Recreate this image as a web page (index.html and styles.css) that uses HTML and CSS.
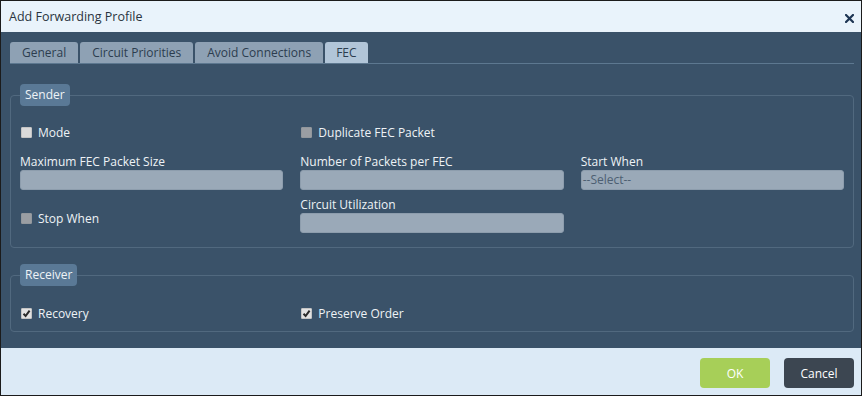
FILE: index.html
```html
<!DOCTYPE html>
<html lang="en">
<head>
  <meta charset="UTF-8">
  <meta name="viewport" content="width=device-width, initial-scale=1.0">
  <title>Add Forwarding Profile</title>
  <link rel="stylesheet" href="styles.css">
</head>
<body>
  <div class="dialog">
    <div class="dialog-head">
      <span class="dialog-title">Add Forwarding Profile</span>
      <button class="close" title="Close">
        <svg width="9" height="9" viewBox="0 0 9 9"><path d="M1 1L8 8M8 1L1 8" stroke="#1d3553" stroke-width="2.2" stroke-linecap="square"/></svg>
      </button>
    </div>

    <div class="dialog-body">
      <ul class="tabs">
        <li>General</li>
        <li>Circuit Priorities</li>
        <li>Avoid Connections</li>
        <li class="active">FEC</li>
      </ul>

      <fieldset class="group sender">
        <legend>Sender</legend>
        <div class="row">
          <label class="check"><span class="box"></span>Mode</label>
          <label class="check"><span class="box off"></span>Duplicate FEC Packet</label>
          <div></div>
        </div>
        <div class="row row-fields">
          <div class="field">
            <div class="field-label">Maximum FEC Packet Size</div>
            <div class="input"></div>
          </div>
          <div class="field">
            <div class="field-label">Number of Packets per FEC</div>
            <div class="input"></div>
          </div>
          <div class="field">
            <div class="field-label">Start When</div>
            <div class="input select">--Select--</div>
          </div>
        </div>
        <div class="row row-tight">
          <label class="check stop"><span class="box off"></span>Stop When</label>
          <div class="field">
            <div class="field-label">Circuit Utilization</div>
            <div class="input"></div>
          </div>
          <div></div>
        </div>
      </fieldset>

      <fieldset class="group receiver">
        <legend>Receiver</legend>
        <div class="row">
          <label class="check"><span class="box on"><svg width="9" height="9" viewBox="0 0 9 9"><path d="M1.5 4.8L3.6 7L7.6 1.6" fill="none" stroke="#2a2a2a" stroke-width="2"/></svg></span>Recovery</label>
          <label class="check"><span class="box on"><svg width="9" height="9" viewBox="0 0 9 9"><path d="M1.5 4.8L3.6 7L7.6 1.6" fill="none" stroke="#2a2a2a" stroke-width="2"/></svg></span>Preserve Order</label>
          <div></div>
        </div>
      </fieldset>
    </div>

    <div class="dialog-foot">
      <button class="btn btn-ok">OK</button>
      <button class="btn btn-cancel">Cancel</button>
    </div>
  </div>
</body>
</html>
```

FILE: styles.css
```css
html, body {
  margin: 0;
  padding: 0;
}
body {
  font-family: "Open Sans", "Liberation Sans", sans-serif;
  font-size: 12px;
  background: #fff;
}
.dialog {
  width: 862px;
  height: 396px;
  box-sizing: border-box;
  border: 1px solid #1b1b1b;
  display: flex;
  flex-direction: column;
}
.dialog-head {
  height: 31px;
  background: #e9f3fb;
  display: flex;
  align-items: center;
  justify-content: space-between;
  padding: 0 7px 0 8px;
}
.dialog-title {
  font-size: 12.5px;
  color: #2a3440;
  margin-top: -1px;
}
.close {
  border: none;
  background: none;
  padding: 0;
  width: 10px;
  height: 10px;
  display: flex;
  align-items: center;
  justify-content: center;
  margin-top: 3px;
  cursor: pointer;
}
.dialog-body {
  flex: 1;
  background: #3a5269;
  padding: 10px 7px 0 9px;
}
.tabs {
  list-style: none;
  margin: 0;
  padding: 0;
  display: flex;
  gap: 2px;
  border-bottom: 1px solid #5d7890;
}
.tabs li {
  height: 21px;
  line-height: 22px;
  padding: 0 12px;
  background: #8ea1b4;
  color: #2c3d4f;
  border-radius: 3px 3px 0 0;
}
.tabs li.active {
  background: #b1c5d8;
  padding: 0 11px;
}
.group {
  margin: 20px 0 0;
  border: 1px solid #51697f;
  border-radius: 4px;
  padding: 18px 9px 14px;
  min-width: 0;
}
.group legend {
  background: #5a7996;
  color: #eef3f7;
  height: 22px;
  line-height: 22px;
  padding: 0 5px;
  border-radius: 4px;
}
.receiver {
  margin-top: 16px;
  padding-top: 19px;
  padding-bottom: 10px;
}
.row {
  display: grid;
  grid-template-columns: repeat(3, 1fr);
  column-gap: 17px;
}
.row-fields {
  margin-top: 14px;
}
.row-tight {
  margin-top: 7px;
}
.check {
  display: flex;
  align-items: center;
  height: 16px;
  color: #eef2f6;
  padding-left: 1px;
}
.check.stop {
  margin-top: 13px;
}
.box {
  width: 9px;
  height: 9px;
  border: 1px solid #c4c4c4;
  background: #dadada;
  border-radius: 1px;
  margin-right: 6px;
  display: flex;
  align-items: center;
  justify-content: center;
}
.box.off {
  background: #9a9ea3;
  border-color: #92979c;
}
.box.on {
  background: #e2e2e2;
}
.field-label {
  height: 16px;
  line-height: 16px;
  color: #eef2f6;
}
.input {
  height: 20px;
  box-sizing: border-box;
  background: #9aa9b8;
  border: 1px solid #8d9dad;
  border-radius: 3px;
}
.select {
  color: #4d5f72;
  line-height: 18px;
  padding-left: 1px;
}
.dialog-foot {
  height: 47px;
  box-sizing: border-box;
  background: #dceaf6;
  display: flex;
  justify-content: flex-end;
  align-items: flex-start;
  gap: 14px;
  padding: 10px 7px 0 0;
}
.btn {
  width: 70px;
  height: 30px;
  border: none;
  border-radius: 4px;
  font-family: "Open Sans", "Liberation Sans", sans-serif;
  font-size: 12px;
  color: #fff;
  cursor: pointer;
}
.btn-ok {
  background: #a7cf58;
}
.btn-cancel {
  background: #3c4651;
}
```
